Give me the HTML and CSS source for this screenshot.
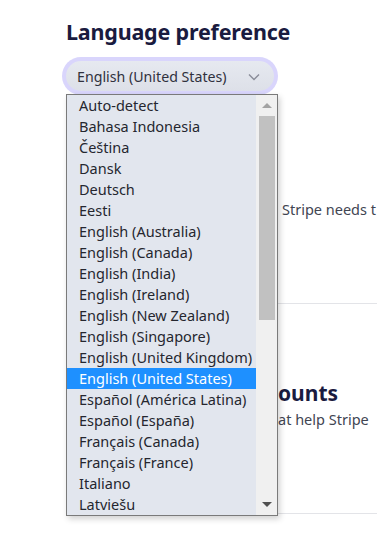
FILE: index.html
```html
<!DOCTYPE html>
<html lang="en">
<head>
<meta charset="utf-8">
<link rel="stylesheet" href="styles.css">
</head>
<body>
<main class="page">
  <h2 class="title">Language preference</h2>
  <div class="select-wrap">
    <div class="select">
      <span>English (United States)</span>
      <svg class="chev" width="12" height="8" viewBox="0 0 12 8"><path d="M1 1.5l5 5 5-5" fill="none" stroke="#8a8d99" stroke-width="1.4"/></svg>
    </div>
  </div>
  <section class="sec first">
    <p class="desc">Stripe needs t</p>
  </section>
  <section class="sec second">
    <h3 class="sub">ounts</h3>
    <p class="desc2">at help Stripe</p>
  </section>

  <div class="dropdown">
    <ul class="options">
      <li>Auto-detect</li>
      <li>Bahasa Indonesia</li>
      <li>Čeština</li>
      <li>Dansk</li>
      <li>Deutsch</li>
      <li>Eesti</li>
      <li>English (Australia)</li>
      <li>English (Canada)</li>
      <li>English (India)</li>
      <li>English (Ireland)</li>
      <li>English (New Zealand)</li>
      <li>English (Singapore)</li>
      <li>English (United Kingdom)</li>
      <li class="selected">English (United States)</li>
      <li>Español (América Latina)</li>
      <li>Español (España)</li>
      <li>Français (Canada)</li>
      <li>Français (France)</li>
      <li>Italiano</li>
      <li>Latviešu</li>
    </ul>
    <div class="scrollbar">
      <div class="arrow up"></div>
      <div class="track"><div class="thumb"></div></div>
      <div class="arrow down"></div>
    </div>
  </div>
</main>
</body>
</html>
```

FILE: styles.css
```css
* { box-sizing: border-box; }
html, body { margin: 0; padding: 0; background: #fff; }
body {
  font-family: "Noto Sans", "Open Sans", sans-serif;
  color: #30313d;
  width: 377px;
  height: 542px;
  overflow: hidden;
}
.page {
  position: relative;
  padding: 18px 0 0 66px;
  height: 542px;
}
.title {
  margin: 0;
  font-size: 21.5px;
  font-weight: 700;
  color: #1a1b3f;
  line-height: 28px;
  letter-spacing: -0.2px;
}
.select-wrap {
  margin: 11px 0 0 -4px;
  width: 216px;
  padding: 4px;
  border-radius: 20px;
  background: #d9d5fc;
}
.select {
  height: 30px;
  border-radius: 16px;
  background: linear-gradient(#e6e9f0, #dde0e8);
  display: flex;
  align-items: center;
  justify-content: space-between;
  padding: 0 14px 0 11px;
  font-size: 14.2px;
  color: #30313d;
}
.chev { margin-top: 1px; }
.sec { border-bottom: 1px solid #e3e4e8; margin-left: 212px; margin-right: 0; }
.first { height: 209px; padding-top: 104px; }
.desc, .desc2 {
  margin: 0;
  font-size: 14.5px;
  white-space: nowrap;
  color: #414552;
}
.desc { padding-left: 4px; }
.second { height: 210px; padding-top: 75px; }
.sub {
  margin: 0;
  font-size: 21px;
  font-weight: 700;
  color: #1a1b3f;
  white-space: nowrap;
  line-height: 28px;
}
.desc2 { margin-top: 1px; line-height: 22px; }

.dropdown {
  position: absolute;
  left: 66px;
  top: 94px;
  width: 212px;
  height: 422px;
  border: 1px solid #7a7a7a;
  background: #e2e6ee;
  display: flex;
  box-shadow: 2px 3px 6px rgba(0,0,0,0.18);
}
.options {
  list-style: none;
  margin: 0;
  padding: 0;
  flex: 1;
}
.options li {
  height: 21px;
  line-height: 21px;
  padding-left: 12px;
  font-size: 14.5px;
  color: #25262f;
  white-space: nowrap;
  overflow: hidden;
}
.options li.selected {
  background: #1e90ff;
  color: #fff;
}
.scrollbar {
  width: 21px;
  background: #f0f0f0;
  display: flex;
  flex-direction: column;
  border-left: 1px solid #f0f0f0;
}
.arrow {
  height: 21px;
  display: flex;
  align-items: center;
  justify-content: center;
}
.arrow::before {
  content: "";
  width: 0; height: 0;
  border-left: 5px solid transparent;
  border-right: 5px solid transparent;
}
.arrow.up::before { border-bottom: 5px solid #a3a3a3; }
.arrow.down::before { border-top: 5px solid #505050; }
.track { flex: 1; padding: 0 2px; }
.thumb { height: 204px; background: #c1c1c1; }
```
